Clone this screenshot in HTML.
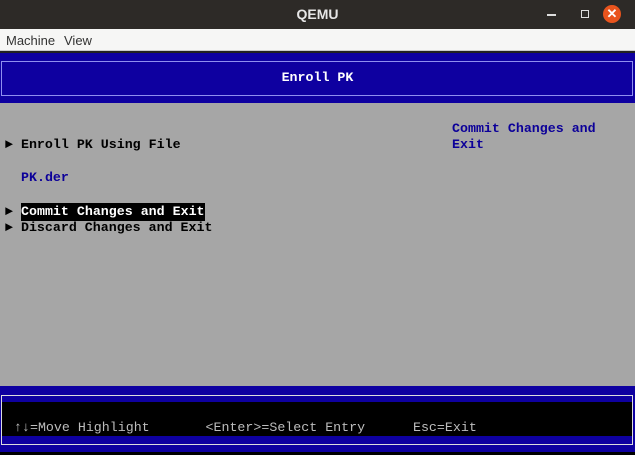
<!DOCTYPE html>
<html><head><meta charset="utf-8"><style>
*{margin:0;padding:0;box-sizing:border-box}
body{width:635px;height:455px;overflow:hidden;background:#a6a6a6;position:relative;font-family:"Liberation Mono",monospace}
.a{position:absolute}
.t{font-size:13.3px;font-weight:bold;line-height:16px;white-space:pre;color:#000}
</style></head><body>
<div class="a" style="left:0;top:0;width:635px;height:29px;background:#2d2a27"></div>
<div class="a" style="left:0;top:6px;width:635px;text-align:center;color:#e6e6e6;font:bold 14px 'Liberation Sans',sans-serif">QEMU</div>
<div class="a" style="left:547px;top:14px;width:9px;height:2px;background:#ddd"></div>
<div class="a" style="left:581px;top:10px;width:8px;height:8px;border:1.5px solid #ddd"></div>
<div class="a" style="left:603px;top:5px;width:18px;height:18px;border-radius:50%;background:#e9541d;color:#fff;font:bold 13px 'Liberation Sans',sans-serif;text-align:center;line-height:18px">✕</div>
<div class="a" style="left:0;top:29px;width:635px;height:22px;background:#f6f6f5;border-bottom:1px solid #ccc"></div>
<div class="a" style="left:6px;top:33px;font:13px 'Liberation Sans',sans-serif;color:#333">Machine</div>
<div class="a" style="left:64px;top:33px;font:13px 'Liberation Sans',sans-serif;color:#333">View</div>
<div class="a" style="left:0;top:51px;width:635px;height:2px;background:#222"></div>
<div class="a" style="left:0;top:53px;width:635px;height:50px;background:#0e00a0"></div>
<div class="a" style="left:1px;top:61px;width:632px;height:35px;border:1px solid #8f8fef"></div>
<div class="a t" style="left:0;top:70px;width:635px;text-align:center;color:#fff">Enroll PK</div>
<div class="a t" style="left:5px;top:137px">► Enroll PK Using File</div>
<div class="a t" style="left:21px;top:170px;color:#0c0099">PK.der</div>
<div class="a t" style="left:5px;top:204px">►</div>
<div class="a t" style="left:21px;top:203px;background:#000;color:#fff;padding:1px 0">Commit Changes and Exit</div>
<div class="a t" style="left:5px;top:220px">► Discard Changes and Exit</div>
<div class="a t" style="left:452px;top:121px;color:#0c0099">Commit Changes and
Exit</div>
<div class="a" style="left:0;top:386px;width:635px;height:66px;background:#0e00a0"></div>
<div class="a" style="left:1px;top:395px;width:632px;height:50px;border:1px solid #ddd;background:#0e00a0"></div>
<div class="a" style="left:2px;top:402px;width:630px;height:34px;background:#000"></div>
<div class="a" style="left:0;top:452px;width:635px;height:3px;background:#000"></div>
<div class="a t" style="left:14px;top:420px;color:#bdbdbd;font-weight:normal">↑↓=Move Highlight       &lt;Enter&gt;=Select Entry      Esc=Exit</div>
</body></html>
